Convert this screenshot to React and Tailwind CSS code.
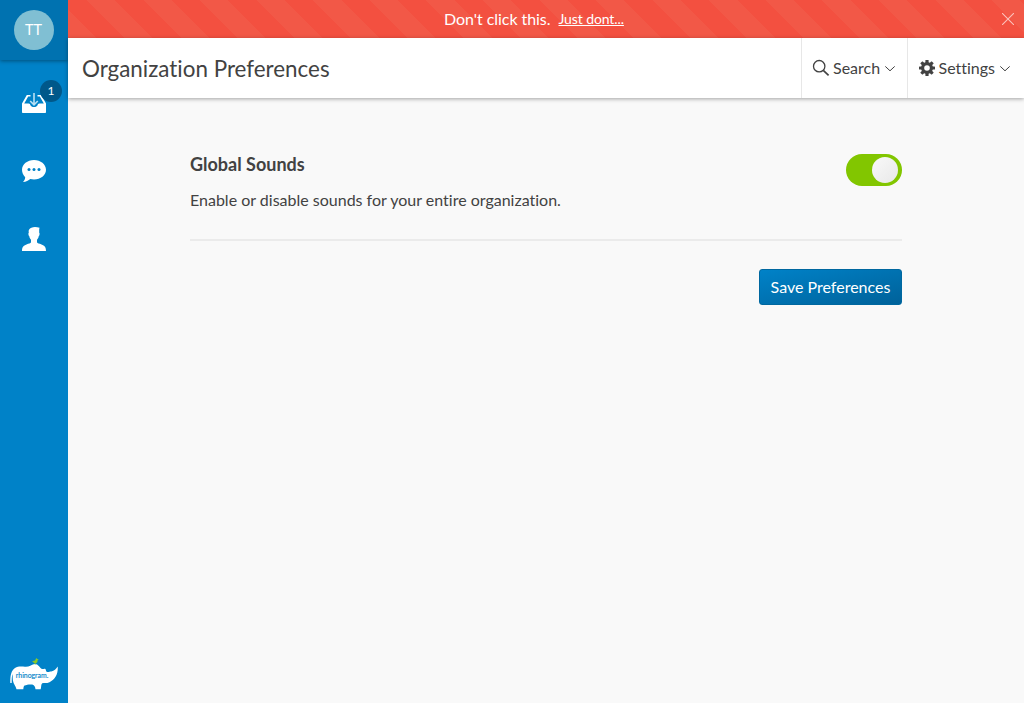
function Chevron() {
  return (
    <svg className="h-[10px] w-[10px]" viewBox="0 0 10 10" fill="none" stroke="#424242" strokeWidth="1">
      <path d="M.3 3.400 5 7.800 9.700 3.400" />
    </svg>
  );
}

function Sidebar() {
  return (
    <aside className="flex h-full w-[68px] shrink-0 flex-col items-center bg-[#0082c8]">
      <div className="flex h-[60px] w-full items-center justify-center bg-[#0072b0] shadow-[0_1px_4px_rgba(0,0,0,0.4)]">
        <div className="flex h-10 w-10 items-center justify-center rounded-full bg-[#80bfd3] pr-px text-[14.4px] text-white">TT</div>
      </div>
      <nav className="flex w-full flex-col items-center">
        <a className="relative flex h-[68px] w-full items-center justify-center pt-[18px]">
          <svg className="h-6 w-6" viewBox="0 0 24 24">
            <path fill="#fff" d="M4.800 4H8.500v1.500H6.200L2.200 12.500H6.500c1.500 0 1.700 1 2 1.700.5 1.200 1.700 1.800 3.500 1.800s3-.6 3.500-1.800c.3-.7.5-1.700 2-1.700h4.300L17.800 5.500H15.500V4h3.700L24 12.500v8.700c0 .5-.3.800-.8.800H.8c-.5 0-.8-.3-.8-.8V12.500z" />
            <path fill="none" stroke="#b8e0f3" strokeWidth="1.600" d="M12 2v11.500M8.200 10l3.800 3.800 3.800-3.800" />
          </svg>
          <span className="absolute left-10 top-5 flex h-[22px] w-[22px] items-center justify-center rounded-full bg-[#00588a] text-[12px] text-white">1</span>
        </a>
        <a className="flex h-[68px] w-full items-center justify-center pt-[18px]">
          <svg className="h-6 w-6" viewBox="0 0 24 24">
            <path fill="#fff" d="M12 1c6.600 0 12 4.300 12 9.800s-5.400 9.700-12 9.700c-1.300 0-2.600-.2-3.700-.5C6.500 21.500 4 22.800 1 23c1.200-1.100 2.100-2.800 2.200-4.800C1.200 16.300 0 13.700 0 10.800 0 5.300 5.400 1 12 1z" />
            <circle cx="7" cy="10.500" r="1.500" fill="#0082c8" />
            <circle cx="12" cy="10.500" r="1.500" fill="#0082c8" />
            <circle cx="17" cy="10.500" r="1.500" fill="#0082c8" />
          </svg>
        </a>
        <a className="flex h-[68px] w-full items-center justify-center pt-[18px]">
          <svg className="h-6 w-6" viewBox="0 0 24 24">
            <path fill="#fff" d="M7 2.800C8 .8 10.500 0 13 0c1.500 0 3 .2 4.600.8-.6 1.200-.3 3-.4 5 .7.400.5 2.700-.5 3.500-.3 1.700-.9 2.700-1.700 3.500v2.400c.3 1 2.300 1.300 4.500 2.200C22.600 18.600 24 20 24 24H0c0-4 1.400-5.400 4.500-6.600 2.200-.9 4.200-1.200 4.500-2.200v-2.400c-.8-.8-1.400-1.800-1.700-3.500-1-.8-1.200-3.100-.5-3.500C6.700 4.600 6.500 3.600 7 2.800z" />
          </svg>
        </a>
      </nav>
      <svg className="mb-[13px] mt-auto h-8 w-12" viewBox="0 0 48 32">
        <path fill="#fff" d="M.3 25C.2 17 1.300 12.500 5 10c3-2 6.500-1.800 10-1.200 4 .4 6-1.800 9.500-2.800 3.500-.4 5 3.600 7.500 5 1.200.4 2.400-.9 3.400.1.800 1 .3 2.200 1.300 2.700 2.200 1 3.300-.8 4.600-.3C44.300 12.800 46 11 47.700 8.500c.6 7-2.200 13-8.200 15.700-3 1.300-5.500.6-7.300 1-1.200.8-.8 3.500-1.500 6h-5.200c-.3-2.500-1.500-4.300-3.300-4.600-3-.5-5.500.4-7.700.8-1 .8-1 2.300-1.200 3.800H6.500C5.800 28 3.500 26 2.900 22.500c-.3-2.500-.3-4.500.1-6.500-1.500 2-1.200 5-1.300 9z" />
        <path fill="#8ac926" d="M21.800 3.200 25 2.600 26.300 0l1 1.100 1.500.3-1.200.8c.1 1.800-.9 3-2.100 3.200v1.400h-.8V5.300c-.9-.2-1.400-.9-1.600-1.500z" />
        <text x="5.800" y="19.600" fill="#0082c8" fontFamily="Lato, sans-serif" fontWeight="400" fontSize="8" stroke="#0082c8" strokeWidth=".15" textLength="32.500" lengthAdjust="spacingAndGlyphs">rhinogram.</text>
      </svg>
    </aside>
  );
}

function Header() {
  return (
    <header className="z-10 flex h-[60px] shrink-0 items-center bg-white shadow-[0_1px_4px_rgba(0,0,0,0.35)]">
      <h1 className="flex-1 pl-[14px] pt-[2px] text-[22.4px] leading-[30px]">Organization Preferences</h1>
      <button className="flex h-full w-[106px] items-center border-l border-[#e7e7e7] pl-[10px]">
        <svg className="h-[18px] w-[18px]" viewBox="0 0 18 18" fill="none" stroke="#424242">
          <circle cx="7.200" cy="7.200" r="5.700" strokeWidth="1.300" />
          <path d="m11.300 11.300 5.300 5" strokeWidth="1.700" />
        </svg>
        <span className="ml-[3px] mr-[5px]">Search</span>
        <Chevron />
      </button>
      <button className="flex h-full w-[117px] items-center border-l border-[#e7e7e7] pl-[11px]">
        <svg className="h-4 w-4" viewBox="0 0 16 16">
          <g fill="#424242">
            <rect x="6.400" width="3.200" height="16" rx=".5" />
            <rect x="6.400" width="3.200" height="16" rx=".5" transform="rotate(45 8 8)" />
            <rect x="6.400" width="3.200" height="16" rx=".5" transform="rotate(90 8 8)" />
            <rect x="6.400" width="3.200" height="16" rx=".5" transform="rotate(135 8 8)" />
            <circle cx="8" cy="8" r="6" />
          </g>
          <circle cx="8" cy="8" r="2.800" fill="#fff" />
        </svg>
        <span className="ml-[3.5px] mr-[5px]">Settings</span>
        <Chevron />
      </button>
    </header>
  );
}

export default function App() {
  return (
    <div className="flex h-screen overflow-hidden bg-[#f9f9f9] font-['Lato',sans-serif] text-[16px] leading-6 text-[#424242] [font-variant-ligatures:none]">
      <Sidebar />
      <div className="flex min-w-0 flex-1 flex-col">
        <div className="relative flex h-[38px] shrink-0 items-center bg-[repeating-linear-gradient(45deg,#f25847_0,#f25847_20px,#f35040_20px,#f35040_40px)] pl-[376px] text-white">
          <span className="tracking-[-0.05px]">Don't click this.</span>
          <a className="ml-2 text-[14px] tracking-[-0.1px] underline">Just dont...</a>
          <svg className="absolute right-[10px] top-[13px] h-3 w-3" viewBox="0 0 12 12" stroke="#fbc2bb" strokeWidth="1.100">
            <path d="m0 0 12 12M12 0 0 12" />
          </svg>
        </div>
        <Header />
        <main className="ml-[122px] w-[712px] pt-[54px]">
          <section className="flex h-[89px] items-start justify-between border-b-2 border-[#ebebeb]">
            <div>
              <h2 className="pt-px text-[18px] font-bold leading-[22px]">Global Sounds</h2>
              <p className="mt-[13px]">Enable or disable sounds for your entire organization.</p>
            </div>
            <div className="mt-[2px] flex h-8 w-14 items-center justify-end rounded-full bg-[#82c600] pr-1">
              <div className="h-[26px] w-[26px] rounded-full bg-linear-to-br from-[#f9f9f9] to-[#e8e8e8]" />
            </div>
          </section>
          <div className="flex justify-end pt-7">
            <button className="flex h-9 w-[143px] items-center justify-center rounded-[3px] border border-[#0068a0] bg-linear-to-br from-[#0082c8] to-[#00629a] text-white">Save Preferences</button>
          </div>
        </main>
      </div>
    </div>
  );
}
